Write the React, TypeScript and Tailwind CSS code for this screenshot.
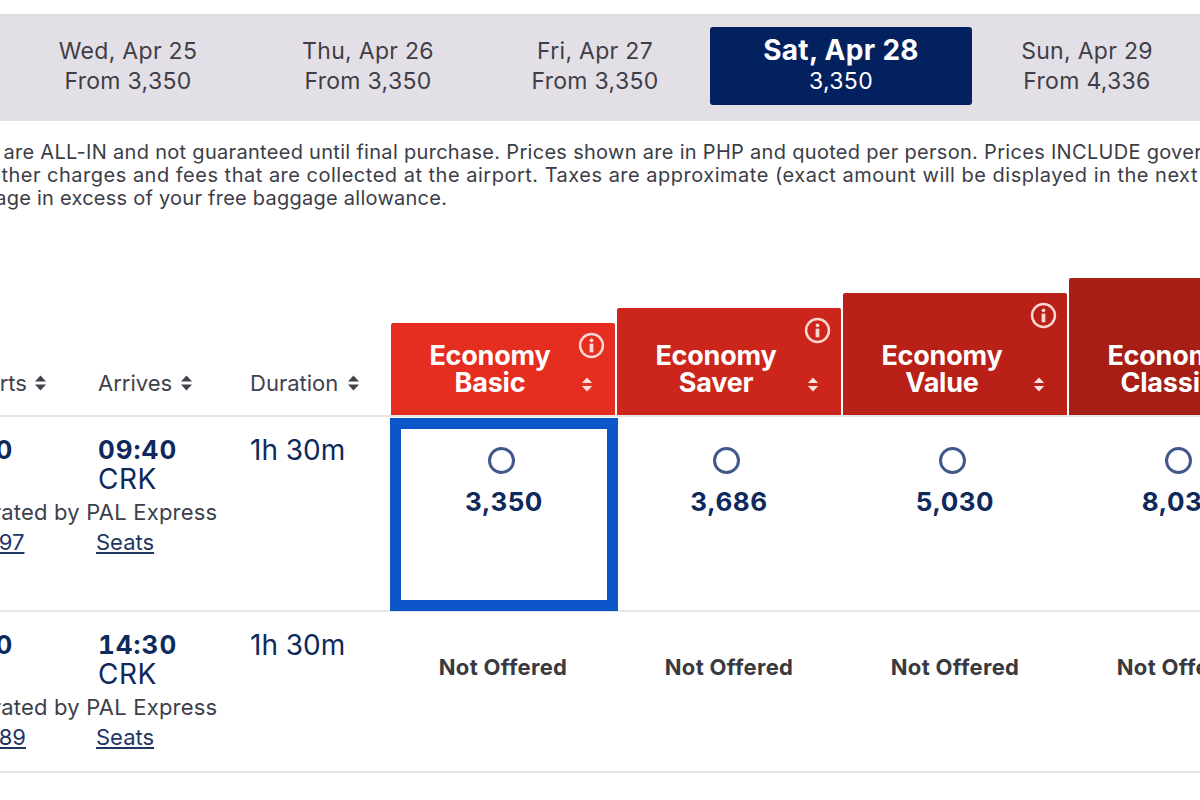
const font = { fontFamily: 'Inter, "Open Sans", sans-serif' }

const dates = [
  { label: 'Wed, Apr 25', price: 'From 3,350', w: 'w-[256px]' },
  { label: 'Thu, Apr 26', price: 'From 3,350', w: 'w-[224px]' },
  { label: 'Fri, Apr 27', price: 'From 3,350', w: 'w-[230px]' },
]

const fares = [
  { name: ['Economy', 'Basic'], bg: 'bg-[#e52d20]', h: 'h-[92px]' },
  { name: ['Economy', 'Saver'], bg: 'bg-[#cc261c]', h: 'h-[107px]' },
  { name: ['Economy', 'Value'], bg: 'bg-[#b92017]', h: 'h-[122px]' },
  { name: ['Economy', 'Classic'], bg: 'bg-[#a61e14]', h: 'h-[137px]' },
]

const SortIcon = ({ className }: { className: string }) => (
  <svg viewBox="0 0 12 16" className={className} fill="currentColor">
    <path d="M6 0.5 11.5 6.5H0.5Z" />
    <path d="M6 15.5 11.5 9.5H0.5Z" />
  </svg>
)

const InfoIcon = () => (
  <svg viewBox="0 0 26 26" className="absolute top-[9px] right-[10px] h-[27px] w-[27px] text-[#fbd5cf]">
    <circle cx="13" cy="13" r="11" fill="none" stroke="currentColor" strokeWidth="2.4" />
    <circle cx="13" cy="8" r="1.8" fill="currentColor" />
    <rect x="11.2" y="11.2" width="3.6" height="8.4" fill="currentColor" />
  </svg>
)

const Radio = () => (
  <div className="mx-auto h-[27px] w-[27px] -translate-x-[3px] rounded-full border-[3px] border-[#40588a]" />
)

const FlightInfo = ({ dep, arr, flight }: { dep: string; arr: string; flight: string }) => (
  <div className="w-[390px] shrink-0 pt-[18px]">
    <div className="-ml-[66px] flex text-[#0e2a5c]">
      <div className="w-[164px]">
        <div className="text-[26px] font-bold leading-[29px] tabular-nums tracking-[1px]">{dep}</div>
        <div className="text-[28px] leading-[30px] tracking-[0.5px]">ILO</div>
      </div>
      <div className="w-[152px]">
        <div className="text-[26px] font-bold leading-[29px] tabular-nums tracking-[1px]">{arr}</div>
        <div className="text-[28px] leading-[30px] tracking-[0.5px]">CRK</div>
      </div>
      <div className="text-[28px] leading-[30px]">1h 30m</div>
    </div>
    <div className="-ml-[51px] mt-[6px] whitespace-nowrap text-[22px] leading-[24px] tracking-[0.2px] text-[#3d3f4a]">
      Operated by PAL Express
    </div>
    <div className="-ml-[58px] mt-[6px] flex text-[22px] leading-[24px] text-[#1f3564]">
      <div className="w-[154px]">
        <span className="underline underline-offset-2">{flight}</span>
      </div>
      <span className="underline underline-offset-2">Seats</span>
    </div>
  </div>
)

export default function App() {
  return (
    <div className="h-[800px] w-[1200px] overflow-hidden bg-white" style={font}>
      <div className="h-[14px]" />
      <div className="flex h-[107px] items-center border-t-2 border-[#dedce0] bg-[#e3dfe7] pb-[6px] text-[23px] leading-[30px] tracking-[0.3px] text-[#3f3e46]">
        {dates.map(d => (
          <div key={d.label} className={`${d.w} shrink-0 text-center`}>
            <div>{d.label}</div>
            <div>{d.price}</div>
          </div>
        ))}
        <div className="h-[78px] w-[262px] shrink-0 rounded-[3px] bg-[#04215f] pt-[6px] text-center text-white">
          <div className="text-[28px] font-bold leading-[34px]">Sat, Apr 28</div>
          <div className="leading-[28px]">3,350</div>
        </div>
        <div className="w-[230px] shrink-0 text-center">
          <div>Sun, Apr 29</div>
          <div>From 4,336</div>
        </div>
      </div>

      <div className="mt-[20px] whitespace-nowrap text-[20px] leading-[23px] text-[#3c3d46]">
        <div className="-ml-[56px] tracking-[0.3px]">
          Fares are ALL-IN and not guaranteed until final purchase. Prices shown are in PHP and quoted per person. Prices INCLUDE government taxes
        </div>
        <div className="-ml-[54px] tracking-[0.5px]">
          and other charges and fees that are collected at the airport. Taxes are approximate (exact amount will be displayed in the next page)
        </div>
        <div className="-ml-[87px] tracking-[0.25px]">for baggage in excess of your free baggage allowance.</div>
      </div>

      <div className="mt-[68px] flex h-[137px] items-end">
        <div className="flex h-[62px] w-[391px] shrink-0 items-center pb-[2px] text-[22px] text-[#40424c]">
          <div className="-ml-[55px] flex w-[153px] items-center gap-[7px]">
            Departs
            <SortIcon className="h-[16px] w-[13px]" />
          </div>
          <div className="flex w-[152px] items-center gap-[8px]">
            Arrives
            <SortIcon className="h-[16px] w-[13px]" />
          </div>
          <div className="flex items-center gap-[9px]">
            Duration
            <SortIcon className="h-[16px] w-[13px]" />
          </div>
        </div>
        <div className="flex items-end gap-[2px]">
          {fares.map(f => (
            <div
              key={f.name[1]}
              className={`${f.h} ${f.bg} relative flex w-[224px] shrink-0 flex-col justify-end rounded-t-[2px] pb-[19px] text-white`}
            >
              <InfoIcon />
              <div className="w-[198px] text-center text-[27px] font-bold leading-[27px] tracking-[-0.2px]">
                <div>{f.name[0]}</div>
                <div>{f.name[1]}</div>
              </div>
              <SortIcon className="absolute bottom-[23px] left-[190px] h-[15px] w-[12px] text-[#fbe3df]" />
            </div>
          ))}
        </div>
      </div>
      <div className="h-[2px] bg-[#e6e6e8]" />

      <div className="flex h-[195px] border-b-2 border-[#e6e6e8]">
        <FlightInfo dep="08:10" arr="09:40" flight="PR 2197" />
        <div className="-mr-[2px] mt-px h-[193px] w-[228px] shrink-0 border-[11px] border-[#0c56c9] pt-[18px]">
          <Radio />
          <div className="mt-[13px] text-center text-[26px] font-bold leading-[30px] tracking-[0.5px] text-[#0e2a5c]">
            3,350
          </div>
        </div>
        {['3,686', '5,030', '8,030'].map(p => (
          <div key={p} className="w-[226px] shrink-0 pt-[30px]">
            <Radio />
            <div className="mt-[13px] text-center text-[26px] font-bold leading-[30px] tracking-[0.5px] text-[#0e2a5c]">
              {p}
            </div>
          </div>
        ))}
      </div>

      <div className="flex h-[161px] border-b-2 border-[#e6e6e8]">
        <FlightInfo dep="13:00" arr="14:30" flight="PR 2189" />
        <div className="flex">
          {[0, 1, 2, 3].map(i => (
            <div
              key={i}
              className="w-[226px] shrink-0 whitespace-nowrap pt-[43px] text-center text-[22px] font-bold leading-[24px] tracking-[0.3px] text-[#3a3a3e]"
            >
              Not Offered
            </div>
          ))}
        </div>
      </div>
    </div>
  )
}
